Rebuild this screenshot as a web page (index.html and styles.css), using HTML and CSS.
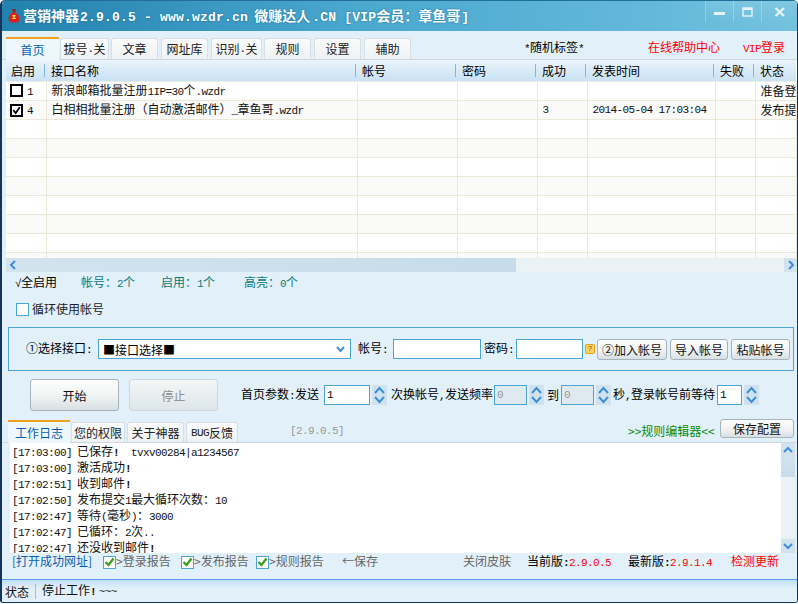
FILE: index.html
```html
<!DOCTYPE html>
<html lang="zh-CN">
<head>
  <meta charset="UTF-8">
  <title>营销神器</title>
  <link rel="stylesheet" href="styles.css">
</head>
<body>
  <div class="window">
    <div class="titlebar">
      <svg class="app-icon" width="12" height="16" viewBox="0 0 12 16">
        <path d="M4 1 L8 1 L7 4 L5 4 Z" fill="#7a2a1a"/>
        <path d="M5 4 L7 4 C11 7 12 10 11 13 C10 15 2 15 1 13 C0 10 1 7 5 4 Z" fill="#d8201c"/>
        <path d="M4 7 L8 7 L6.5 10 L8 10 L8 11 L4 11 L4 10 L5.5 10 Z" fill="#f5d040"/>
      </svg>
      <div class="title">营销神器<span class="tl">2.9.0.5 - www.wzdr.cn</span> <span class="tw">微赚达人</span><span class="tl">.CN [VIP</span>会员：章鱼哥<span class="tl">]</span></div>
      <div class="controls">
        <div class="ctl ctl-min"><svg width="12" height="4" viewBox="0 0 12 4"><rect width="11" height="3" fill="#e4f2f8"/></svg></div>
        <div class="ctl ctl-max"><svg width="12" height="10" viewBox="0 0 12 10"><rect x="1" y="1" width="9" height="8" fill="none" stroke="#e4f2f8" stroke-width="1.4"/><rect x="1" y="1" width="9" height="2" fill="#e4f2f8"/></svg></div>
        <div class="ctl ctl-close"><svg width="12" height="10" viewBox="0 0 12 10"><path d="M1.5 1 L10 9 M10 1 L1.5 9" stroke="#e4f2f8" stroke-width="2.4"/></svg></div>
      </div>
    </div>

    <div class="body">
      <div class="tabs">
        <div class="tab active first">首页</div>
        <div class="tab t49">拔号<span class="m">.</span>关</div>
        <div class="tab">文章</div>
        <div class="tab">网址库</div>
        <div class="tab t51">识别<span class="m">.</span>关</div>
        <div class="tab">规则</div>
        <div class="tab">设置</div>
        <div class="tab">辅助</div>
        <div class="tab-links">
          <span class="rand"><span class="m">*</span>随机标签<span class="m">*</span></span>
          <span class="red help">在线帮助中心</span>
          <span class="red vip"><span class="m">VIP</span>登录</span>
        </div>
      </div>

      <div class="table-wrap">
        <table class="grid">
          <colgroup>
            <col class="c1"><col class="c2"><col class="c3"><col class="c4"><col class="c5"><col class="c6"><col class="c7"><col class="c8">
          </colgroup>
          <thead>
            <tr>
              <th><div>启用</div></th><th><div>接口名称</div></th><th><div>帐号</div></th><th><div>密码</div></th><th><div>成功</div></th><th><div>发表时间</div></th><th><div>失败</div></th><th><div class="last">状态</div></th>
            </tr>
          </thead>
          <tbody>
            <tr>
              <td class="chk"><span class="box"></span><span class="m">1</span></td>
              <td>新浪邮箱批量注册<span class="m">1IP=30</span>个<span class="m">.wzdr</span></td><td></td><td></td><td></td><td></td><td></td><td>准备登录</td>
            </tr>
            <tr>
              <td class="chk"><span class="box"><svg width="11" height="11" viewBox="0 0 11 11"><path d="M1.5 5 L4.5 8.5 L9.5 1.5" fill="none" stroke="#000" stroke-width="2.2"/></svg></span><span class="m">4</span></td>
              <td>白相相批量注册（自动激活邮件）<span class="m">_</span>章鱼哥<span class="m">.wzdr</span></td><td></td><td></td><td class="m">3</td><td class="m">2014-05-04 17:03:04</td><td></td><td>发布提交</td>
            </tr>
            <tr><td></td><td></td><td></td><td></td><td></td><td></td><td></td><td></td></tr>
            <tr><td></td><td></td><td></td><td></td><td></td><td></td><td></td><td></td></tr>
            <tr><td></td><td></td><td></td><td></td><td></td><td></td><td></td><td></td></tr>
            <tr><td></td><td></td><td></td><td></td><td></td><td></td><td></td><td></td></tr>
            <tr><td></td><td></td><td></td><td></td><td></td><td></td><td></td><td></td></tr>
            <tr><td></td><td></td><td></td><td></td><td></td><td></td><td></td><td></td></tr>
            <tr><td></td><td></td><td></td><td></td><td></td><td></td><td></td><td></td></tr>
            <tr><td></td><td></td><td></td><td></td><td></td><td></td><td></td><td></td></tr>
          </tbody>
        </table>
      </div>

      <div class="hscroll">
        <div class="sb-btn"><svg width="8" height="10" viewBox="0 0 8 10"><path d="M6 1 L2 5 L6 9" fill="none" stroke="#3d8ed8" stroke-width="2"/></svg></div>
        <div class="sb-thumb"></div>
        <div class="sb-track"></div>
        <div class="sb-btn"><svg width="8" height="10" viewBox="0 0 8 10"><path d="M2 1 L6 5 L2 9" fill="none" stroke="#3d8ed8" stroke-width="2"/></svg></div>
      </div>

      <div class="stats">
        <span class="all"><span class="m">√</span>全启用</span>
        <span class="teal s1">帐号：<span class="m">2</span>个</span>
        <span class="teal s2">启用：<span class="m">1</span>个</span>
        <span class="teal s3">高亮：<span class="m">0</span>个</span>
      </div>

      <label class="loop"><span class="cbox"></span>循环使用帐号</label>

      <div class="group">
        <span class="lb-pick">①选择接口<span class="m">:</span></span>
        <div class="select">■接口选择■<svg width="9" height="7" viewBox="0 0 9 7"><path d="M1 1 L4.5 5 L8 1" fill="none" stroke="#3d8ed8" stroke-width="2"/></svg></div>
        <span class="lb-acc">帐号<span class="m">:</span></span>
        <div class="input i-acc"></div>
        <span class="lb-pwd">密码<span class="m">:</span></span>
        <div class="input i-pwd"></div>
        <span class="q"><span class="m">?</span></span>
        <button class="btn b70">②加入帐号</button>
        <button class="btn b59">导入帐号</button>
        <button class="btn b60">粘贴帐号</button>
      </div>

      <div class="run">
        <button class="btn big">开始</button>
        <button class="btn big off">停止</button>
        <span class="r-a">首页参数<span class="m">:</span>发送</span>
        <div class="input spin-in w46"><span class="m">1</span></div>
        <div class="spin"><svg width="15" height="20" viewBox="0 0 15 20"><path d="M3 8 L7.5 3 L12 8 M3 12 L7.5 17 L12 12" fill="none" stroke="#3d8ed8" stroke-width="2"/></svg></div>
        <span class="r-b">次换帐号<span class="m">,</span>发送频率</span>
        <div class="input spin-in dis w33"><span class="m">0</span></div>
        <div class="spin"><svg width="15" height="20" viewBox="0 0 15 20"><path d="M3 8 L7.5 3 L12 8 M3 12 L7.5 17 L12 12" fill="none" stroke="#3d8ed8" stroke-width="2"/></svg></div>
        <span class="r-c">到</span>
        <div class="input spin-in dis w33"><span class="m">0</span></div>
        <div class="spin"><svg width="15" height="20" viewBox="0 0 15 20"><path d="M3 8 L7.5 3 L12 8 M3 12 L7.5 17 L12 12" fill="none" stroke="#3d8ed8" stroke-width="2"/></svg></div>
        <span class="r-d">秒<span class="m">,</span>登录帐号前等待</span>
        <div class="input spin-in w25"><span class="m">1</span></div>
        <div class="spin"><svg width="15" height="20" viewBox="0 0 15 20"><path d="M3 8 L7.5 3 L12 8 M3 12 L7.5 17 L12 12" fill="none" stroke="#3d8ed8" stroke-width="2"/></svg></div>
      </div>

      <div class="log-tabs">
        <div class="tab active lt1">工作日志</div>
        <div class="tab lt2">您的权限</div>
        <div class="tab lt3">关于神器</div>
        <div class="tab lt4"><span class="m">BUG</span>反馈</div>
        <span class="ver m">[2.9.0.5]</span>
        <span class="editor">&gt;&gt;规则编辑器&lt;&lt;</span>
        <button class="btn save">保存配置</button>
      </div>

      <div class="log">
        <div class="log-text">
          <div><span class="m ts">[17:03:00]</span>已保存<b class="m">!</b><span class="m acct">tvxv00284|a1234567</span></div>
          <div><span class="m ts">[17:03:00]</span>激活成功<b class="m">!</b></div>
          <div><span class="m ts">[17:02:51]</span>收到邮件<b class="m">!</b></div>
          <div><span class="m ts">[17:02:50]</span>发布提交<span class="m">1</span>最大循环次数：<span class="m">10</span></div>
          <div><span class="m ts">[17:02:47]</span>等待<span class="m">(</span>毫秒<span class="m">)</span>：<span class="m">3000</span></div>
          <div><span class="m ts">[17:02:47]</span>已循环：<span class="m">2</span>次<span class="m">..</span></div>
          <div><span class="m ts">[17:02:47]</span>还没收到邮件<b class="m">!</b></div>
        </div>
        <div class="vscroll">
          <div class="vb"><svg width="10" height="8" viewBox="0 0 10 8"><path d="M1 6 L5 2 L9 6" fill="none" stroke="#3d8ed8" stroke-width="2"/></svg></div>
          <div class="v-thumb"></div>
          <div class="v-track"></div>
          <div class="vb"><svg width="10" height="8" viewBox="0 0 10 8"><path d="M1 2 L5 6 L9 2" fill="none" stroke="#3d8ed8" stroke-width="2"/></svg></div>
        </div>
      </div>

      <div class="report">
        <span class="open">[打开成功网址]</span>
        <span class="rep r1"><span class="gbox"><svg width="11" height="10" viewBox="0 0 11 10"><path d="M1.5 5 L4.5 8 L9.5 1.5" fill="none" stroke="#3f9e1e" stroke-width="2.4"/></svg></span>&gt;登录报告</span>
        <span class="rep r2"><span class="gbox"><svg width="11" height="10" viewBox="0 0 11 10"><path d="M1.5 5 L4.5 8 L9.5 1.5" fill="none" stroke="#3f9e1e" stroke-width="2.4"/></svg></span>&gt;发布报告</span>
        <span class="rep r3"><span class="gbox"><svg width="11" height="10" viewBox="0 0 11 10"><path d="M1.5 5 L4.5 8 L9.5 1.5" fill="none" stroke="#3f9e1e" stroke-width="2.4"/></svg></span>&gt;规则报告</span>
        <span class="rep r4">←保存</span>
        <span class="rep r5">关闭皮肤</span>
        <span class="r6">当前版<b class="m">:</b><span class="m red">2.9.0.5</span></span>
        <span class="r7">最新版<b class="m">:</b><span class="m red">2.9.1.4</span></span>
        <span class="red r8">检测更新</span>
      </div>

      <div class="status">
        <span class="st-a">状态</span>
        <span class="st-b">停止工作<b class="m">!</b> <span class="m">~~~</span></span>
      </div>
    </div>
  </div>
</body>
</html>
```

FILE: styles.css
```css
* {
  box-sizing: border-box;
}

html, body {
  margin: 0;
  padding: 0;
  background: #fff;
}

body {
  width: 798px;
  height: 604px;
  overflow: hidden;
  font-family: "Noto Sans CJK SC", sans-serif;
  font-size: 12px;
  line-height: 16px;
  color: #000;
}

/* latin runs sit at 6px per char, like the old bitmap font */
.m {
  font-family: "Liberation Mono", monospace;
  font-size: 11px;
  letter-spacing: -0.6px;
}

.red {
  color: #f00;
}

.window {
  width: 798px;
  height: 603px;
  display: flex;
  flex-direction: column;
  border: 1px solid #14365a;
  border-top: none;
  border-left-width: 2px;
  border-radius: 5px 5px 3px 3px;
  overflow: hidden;
}

/* title bar */
.titlebar {
  height: 31px;
  flex: none;
  display: flex;
  align-items: center;
  background: linear-gradient(90deg, #2381ae, #4ba8cf 45%, #62b8da 80%, #74c2de);
  border-top: 1px solid #1f6f96;
}

.app-icon {
  margin-left: 6px;
  margin-right: 3px;
  flex: none;
}

.title {
  font-size: 14px;
  font-weight: bold;
  color: #fff;
  white-space: nowrap;
  text-shadow: 0 0 2px #1a6d94;
}

.tl {
  font-family: "Liberation Mono", monospace;
  font-size: 13px;
  letter-spacing: 0.2px;
  margin-left: 1px;
}

.tw {
  margin-left: 3px;
  margin-right: 1px;
}

.controls {
  margin-left: auto;
  align-self: flex-start;
  display: flex;
  height: 21px;
}

.ctl {
  width: 28px;
  height: 21px;
  display: flex;
  align-items: center;
  justify-content: center;
  border-left: 1px solid rgba(255, 255, 255, 0.25);
  background: linear-gradient(rgba(255, 255, 255, 0.1), rgba(255, 255, 255, 0));
}

.ctl-min svg {
  margin-top: 4px;
}

.ctl-close {
  width: 36px;
}

/* main area */
.body {
  flex: 1;
  background: #e2f1f9;
  display: flex;
  flex-direction: column;
  min-height: 0;
}

.tabs {
  height: 29px;
  flex: none;
  padding: 6px 0 0 4px;
  display: flex;
  align-items: flex-end;
  border-bottom: 1px solid #ccd8e0;
}

.tab {
  width: 47px;
  height: 21px;
  margin-right: 3px;
  border: 1px solid #d5dfe4;
  border-bottom: none;
  border-radius: 3px 3px 0 0;
  background: linear-gradient(#fbfbfb, #eef2f3);
  display: flex;
  align-items: center;
  justify-content: center;
  white-space: nowrap;
  color: #222;
}

.tab.active {
  height: 23px;
  margin-bottom: -1px;
  background: #eef7fc;
  border: none;
  border-top: 2px solid #f0a028;
  color: #0b5fb0;
  border-radius: 0;
}

.tab.first {
  width: 53px;
  margin-right: 1px;
}

.t49 {
  width: 49px;
  margin-right: 2px;
}

.t51 {
  width: 51px;
  margin-right: 2px;
}

.tab-links {
  flex: 1;
  align-self: center;
  display: flex;
  height: 16px;
  margin-top: -2px;
}

.rand {
  margin-left: 110px;
}

.help {
  margin-left: 64px;
}

.vip {
  margin-left: 23px;
}

/* interface table */
.table-wrap {
  margin-left: 4px;
  height: 198px;
  flex: none;
  overflow: hidden;
  background: #fff;
}

.grid {
  width: 790px;
  table-layout: fixed;
  border-collapse: collapse;
}

.c1 { width: 40px; }
.c2 { width: 311px; }
.c3 { width: 100px; }
.c4 { width: 80px; }
.c5 { width: 50px; }
.c6 { width: 128px; }
.c7 { width: 40px; }
.c8 { width: 41px; }

.grid th {
  height: 21px;
  padding: 0;
  font-weight: normal;
  text-align: left;
  background: linear-gradient(#eaf4fb, #c8e1f4);
  border-bottom: 1px solid #f0eee0;
}

.grid th div {
  height: 13px;
  line-height: 13px;
  padding-left: 5px;
  border-right: 1px solid #84b4dc;
  margin-right: 1px;
}

.grid th div.last {
  border-right: none;
}

.grid td {
  height: 19px;
  padding: 0 0 0 5px;
  border-right: 1px solid #ebe8d9;
  border-bottom: 1px solid #ebe8d9;
  white-space: nowrap;
  overflow: hidden;
  color: #111;
}

.grid tbody tr:nth-child(even) td {
  background: #fafaf8;
}

.grid td.chk {
  padding-left: 4px;
}

.box {
  display: inline-flex;
  align-items: center;
  justify-content: center;
  width: 13px;
  height: 13px;
  border: 2px solid #000;
  background: #fff;
  vertical-align: -2px;
  margin-right: 4px;
}

/* horizontal scrollbar */
.hscroll {
  margin-left: 4px;
  height: 14px;
  flex: none;
  display: flex;
  background: #ebf2f6;
}

.sb-btn {
  width: 14px;
  background: #d2e3ee;
  display: flex;
  align-items: center;
  justify-content: center;
}

.sb-btn:last-child {
  width: 13px;
}

.sb-thumb {
  width: 496px;
  background: linear-gradient(90deg, #d2e3ee, #c6dcea);
}

.sb-track {
  flex: 1;
}

/* counters */
.stats {
  height: 22px;
  flex: none;
  display: flex;
  align-items: center;
  padding-left: 13px;
}

.teal {
  color: #0a7a78;
}

.all { width: 66px; }
.s1 { width: 80px; }
.s2 { width: 83px; }

.loop {
  height: 33px;
  flex: none;
  display: flex;
  align-items: center;
  padding: 0 0 3px 14px;
  color: #222;
}

.cbox {
  width: 13px;
  height: 13px;
  margin-right: 3px;
  border: 1px solid #4ba5d8;
  background: #fff;
}

/* interface picker */
.group {
  margin-left: 6px;
  width: 786px;
  height: 44px;
  flex: none;
  display: flex;
  align-items: center;
  border: 1px solid #4ba5d8;
  padding-left: 17px;
}

.input {
  background: #fff;
  border: 1px solid #4ba5d8;
  height: 20px;
  flex: none;
}

.select {
  width: 253px;
  height: 20px;
  margin-left: 1px;
  padding: 1px 5px 0 4px;
  background: #fff;
  border: 1px solid #4ba5d8;
  display: flex;
  justify-content: space-between;
  align-items: center;
  flex: none;
}

.lb-pick { width: 71px; }
.lb-acc { width: 35px; margin-left: 7px; }
.i-acc { width: 88px; }
.lb-pwd { width: 32px; margin-left: 3px; }
.i-pwd { width: 67px; }

.q {
  width: 10px;
  height: 10px;
  margin: 0 2px 0 2px;
  border: 1px solid #e8a020;
  border-radius: 2px;
  background: #fcd060;
  display: flex;
  align-items: center;
  justify-content: center;
  color: #a06000;
  line-height: 8px;
}

.q .m {
  font-size: 8px;
  letter-spacing: 0;
}

.btn {
  font-family: "Noto Sans CJK SC", sans-serif;
  font-size: 12px;
  color: #111;
  padding: 0;
  height: 21px;
  flex: none;
  border: 1px solid #a8b4bc;
  border-radius: 3px;
  background: linear-gradient(#fdfdfd, #f2f4f4 50%, #d8e0e4);
}

.b70 { width: 70px; margin-right: 3px; }
.b59 { width: 58px; margin-right: 3px; }
.b60 { width: 59px; }

/* start / stop row */
.run {
  height: 49px;
  flex: none;
  display: flex;
  align-items: center;
  padding: 0 0 1px 28px;
}

.btn.big {
  width: 89px;
  height: 32px;
  margin-right: 10px;
}

.btn.off {
  color: #8a8a8a;
  border-color: #cdd6dc;
  background: linear-gradient(#f4f6f6, #dde6ea);
  margin-right: 23px;
}

.spin-in {
  display: flex;
  align-items: center;
  padding-left: 2px;
}

.spin-in.dis {
  background: #dfeaf0;
  color: #999;
}

.w46 { width: 46px; }
.w33 { width: 33px; }
.w25 { width: 25px; }

.spin {
  width: 15px;
  height: 20px;
  margin-left: 2px;
  background: #cfe2ee;
  display: flex;
  align-items: center;
  justify-content: center;
  overflow: hidden;
}

.r-a { width: 83px; }
.r-b { width: 103px; margin-left: 4px; }
.r-c { width: 14px; margin-left: 3px; }
.r-d { width: 104px; margin-left: 2px; }

/* log */
.log-tabs {
  height: 23px;
  flex: none;
  display: flex;
  align-items: flex-end;
  padding-left: 6px;
  border-bottom: 1px solid #ccd8e0;
}

.log-tabs .tab {
  height: 20px;
  margin-right: 2px;
}

.log-tabs .tab.active {
  height: 23px;
}

.lt1 { width: 62px; }
.lt2 { width: 54px; }
.lt3 { width: 57px; }
.lt4 { width: 52px; }

.log-tabs .lt1 {
  margin-right: 1px;
}

.ver {
  color: #999;
  width: 54px;
  margin: 0 0 3px 50px;
  white-space: nowrap;
}

.editor {
  color: #0a8a0a;
  width: 84px;
  margin: 0 0 3px 284px;
  white-space: nowrap;
}

.btn.save {
  width: 74px;
  height: 19px;
  line-height: 16px;
  margin: 0 0 4px 8px;
}

.log {
  height: 110px;
  flex: none;
  display: flex;
  margin-left: 8px;
  margin-right: 2px;
  background: #fff;
  overflow: hidden;
}

.log-text {
  flex: 1;
  padding-left: 2px;
  color: #111;
}

.log-text div {
  height: 16px;
  white-space: nowrap;
}

.ts {
  display: inline-block;
  width: 65px;
}

.acct {
  margin-left: 12px;
}

.log-text b {
  font-weight: bold;
}

.vscroll {
  width: 14px;
  display: flex;
  flex-direction: column;
  background: #ebf2f6;
}

.vb {
  height: 14px;
  background: #d2e3ee;
  display: flex;
  align-items: center;
  justify-content: center;
}

.v-thumb {
  height: 20px;
  background: linear-gradient(#d2e3ee, #c6dcea);
}

.v-track {
  flex: 1;
}

/* report toggles */
.report {
  height: 26px;
  flex: none;
  display: flex;
  align-items: flex-start;
  padding: 0 0 0 10px;
  white-space: nowrap;
  color: #666;
}

.open {
  color: #0b5fb0;
  width: 91px;
}

.rep {
  display: flex;
  align-items: center;
}

.gbox {
  width: 13px;
  height: 13px;
  border: 1px solid #4ba5d8;
  background: #fff;
  display: flex;
  align-items: center;
  justify-content: center;
  margin-top: 2px;
}

.r1 { width: 78px; }
.r2 { width: 75px; }
.r3 { width: 86px; }
.r4 { width: 121px; }
.r5 { width: 64px; }
.r6 { width: 101px; color: #000; }
.r7 { width: 103px; color: #000; }

/* status bar */
.status {
  flex: 1;
  border-top: 1px solid #5b9ce8;
  background: linear-gradient(#c3dff8, #e2f1f9 9px);
  display: flex;
  align-items: center;
  padding: 0 0 0 3px;
  color: #111;
}

.st-a {
  width: 31px;
  height: 15px;
  line-height: 15px;
  border-right: 1px solid #9cc0d8;
  margin-right: 6px;
}
```
